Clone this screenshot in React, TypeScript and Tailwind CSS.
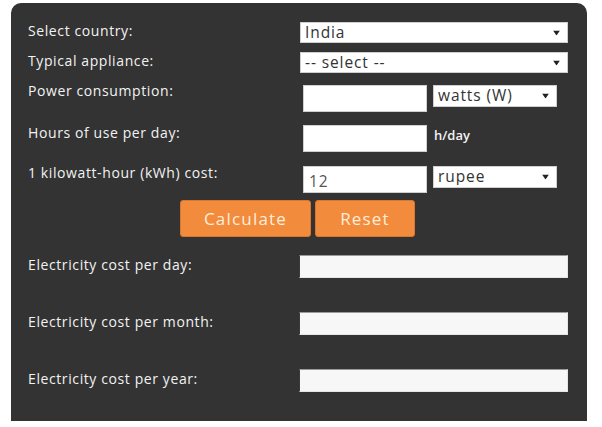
import React from "react";

const F = { fontFamily: "'Open Sans', Lato, sans-serif" };

const Arrow = () => (
  <svg
    className="pointer-events-none absolute right-[8px] top-1/2 -translate-y-1/2"
    width="7"
    height="5"
    viewBox="0 0 7 5"
  >
    <path d="M0 0 L7 0 L3.5 5 Z" fill="#222" />
  </svg>
);

function Select({ value, className }: { value: string; className: string }) {
  return (
    <div className={`relative ${className}`}>
      <select
        defaultValue={value}
        className="h-full w-full appearance-none border border-[#cfcfcf] bg-white pl-[4px] text-[15.5px] leading-none tracking-[0.9px] text-[#333] outline-none"
        style={F}
      >
        <option>{value}</option>
      </select>
      <Arrow />
    </div>
  );
}

const Output = () => (
  <div className="h-[23px] w-[269px] border border-t-[#9a9a9a] border-l-[#3a3a3a] border-r-[#e6e6e6] border-b-[#e6e6e6] bg-[#f7f7f7]" />
);

export default function App() {
  return (
    <div className="h-[427px] w-[602px] bg-white pl-[11px] pt-[3px]">
      <div
        className="relative h-[418px] w-[576px] rounded-t-[10px] bg-[#333333] pl-[17px] pr-[19px] pt-[19px] text-[14px] leading-[18px] tracking-[0.6px] text-[#f2f2f2]"
        style={F}
      >
        {/* Row 1 */}
        <div className="flex h-[21px] items-center">
          <div className="-mt-[4px] w-[272px]">Select country:</div>
          <Select value="India" className="h-[21px] w-[268px]" />
        </div>
        {/* Row 2 */}
        <div className="mt-[9px] flex h-[21px] items-center">
          <div className="-mt-[4px] w-[272px]">Typical appliance:</div>
          <Select value="-- select --" className="h-[21px] w-[268px]" />
        </div>
        {/* Row 3 */}
        <div className="mt-[12px] flex h-[27px] items-start">
          <div className="-mt-[3px] w-[272px]">Power consumption:</div>
          <input className="ml-[3px] h-[27px] w-[124px] border border-[#d0d0d0] bg-white outline-none" />
          <Select value="watts (W)" className="ml-[6px] h-[22px] w-[124px]" />
        </div>
        {/* Row 4 */}
        <div className="mt-[13px] flex h-[27px] items-start">
          <div className="-mt-[1px] w-[272px]">Hours of use per day:</div>
          <input className="ml-[3px] h-[27px] w-[124px] border border-[#d0d0d0] bg-white outline-none" />
          <div className="ml-[7px] mt-[1px] text-[13px] font-semibold tracking-normal text-[#f2f2f2]">
            h/day
          </div>
        </div>
        {/* Row 5 */}
        <div className="mt-[14px] flex h-[28px] items-start">
          <div className="-mt-[2px] w-[272px]">1 kilowatt-hour (kWh) cost:</div>
          <input
            defaultValue="12"
            className="ml-[3px] h-[27px] w-[124px] border border-[#d0d0d0] bg-white pl-[5px] pt-[3px] text-[15.5px] tracking-[0.9px] text-[#555] outline-none"
            style={F}
          />
          <Select value="rupee" className="ml-[6px] h-[22px] w-[124px]" />
        </div>
        {/* Buttons */}
        <div className="mt-[6px] flex justify-center gap-[4px] pr-[1px]">
          <button className="h-[37px] w-[131px] rounded-[3px] border border-[#d9772e] bg-[#f28b3b] text-[17px] tracking-[1.2px] text-[#fdeedd]">
            Calculate
          </button>
          <button className="h-[37px] w-[100px] rounded-[3px] border border-[#d9772e] bg-[#f28b3b] text-[17px] tracking-[1.2px] text-[#fdeedd]">
            Reset
          </button>
        </div>
        {/* Outputs */}
        <div className="mt-[18px] flex h-[23px] items-center">
          <div className="-mt-[3px] w-[271px]">Electricity cost per day:</div>
          <Output />
        </div>
        <div className="mt-[34px] flex h-[23px] items-center">
          <div className="-mt-[3px] w-[271px]">Electricity cost per month:</div>
          <Output />
        </div>
        <div className="mt-[34px] flex h-[23px] items-center">
          <div className="-mt-[3px] w-[271px]">Electricity cost per year:</div>
          <Output />
        </div>
      </div>
    </div>
  );
}
